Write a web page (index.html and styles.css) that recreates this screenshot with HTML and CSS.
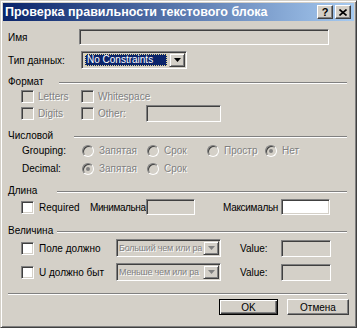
FILE: index.html
```html
<!DOCTYPE html>
<html lang="ru">
<head>
    <meta charset="UTF-8">
    <title>Проверка правильности текстового блока</title>
    <link rel="stylesheet" href="styles.css">
</head>
<body>
    <div class="window">
        <div class="titlebar">
            <span class="title">Проверка правильности текстового блока</span>
            <div class="cap-btns">
                <span class="cap-btn">?</span>
                <span class="cap-btn"><svg width="8" height="7" viewBox="0 0 8 7"><path d="M0.5 0.5 L7.5 6.5 M7.5 0.5 L0.5 6.5" stroke="#000" stroke-width="1.6"/></svg></span>
            </div>
        </div>

        <div class="body">
            <div class="row row-name">
                <span class="lbl lbl-name">Имя</span>
                <span class="field field-name"></span>
            </div>

            <div class="row row-type">
                <span class="lbl lbl-type">Тип данных:</span>
                <div class="combo combo-type">
                    <span class="combo-text selected">No Constraints</span>
                    <span class="combo-btn"><svg width="7" height="4" viewBox="0 0 7 4"><path d="M0 0 H7 L3.5 4 Z" fill="#000"/></svg></span>
                </div>
            </div>

            <!-- Формат -->
            <div class="group-head gh-format">
                <span class="gh-label w-format">Формат</span><span class="gh-line"></span>
            </div>
            <div class="row row-chk1">
                <span class="opt w60"><span class="chk dis"></span><span class="dim">Letters</span></span>
                <span class="opt"><span class="chk dis"></span><span class="dim">Whitespace</span></span>
            </div>
            <div class="row row-chk2">
                <span class="opt w60"><span class="chk dis"></span><span class="dim">Digits</span></span>
                <span class="opt w65"><span class="chk dis"></span><span class="dim">Other:</span></span>
                <span class="field field-other"></span>
            </div>

            <!-- Числовой -->
            <div class="group-head gh-num">
                <span class="gh-label w-num">Числовой</span><span class="gh-line"></span>
            </div>
            <div class="row row-group">
                <span class="lbl lbl-num">Grouping:</span>
                <span class="opt w65"><span class="radio"></span><span class="dim">Запятая</span></span>
                <span class="opt w60"><span class="radio"></span><span class="dim">Срок</span></span>
                <span class="opt w58"><span class="radio"></span><span class="dim">Простр</span></span>
                <span class="opt"><span class="radio on"></span><span class="dim">Нет</span></span>
            </div>
            <div class="row row-dec">
                <span class="lbl lbl-num">Decimal:</span>
                <span class="opt w65"><span class="radio on"></span><span class="dim">Запятая</span></span>
                <span class="opt"><span class="radio"></span><span class="dim">Срок</span></span>
            </div>

            <!-- Длина -->
            <div class="group-head gh-len">
                <span class="gh-label w-len">Длина</span><span class="gh-line"></span>
            </div>
            <div class="row row-len">
                <span class="opt w69"><span class="chk"></span><span>Required</span></span>
                <span class="lbl lbl-min">Минимальна</span>
                <span class="field field-len"></span>
                <span class="lbl lbl-max">Максимальн</span>
                <span class="field field-len white"></span>
            </div>

            <!-- Величина -->
            <div class="group-head gh-size">
                <span class="gh-label w-size">Величина</span><span class="gh-line"></span>
            </div>
            <div class="row row-size1">
                <span class="opt w95"><span class="chk"></span><span>Поле должно</span></span>
                <div class="combo combo-size">
                    <span class="combo-text dim tight">Больший чем или ра</span>
                    <span class="combo-btn"><svg width="7" height="4" viewBox="0 0 7 4"><path d="M0 0 H7 L3.5 4 Z" fill="#808080"/></svg></span>
                </div>
                <span class="lbl lbl-value">Value:</span>
                <span class="field field-value"></span>
            </div>
            <div class="row row-size2">
                <span class="opt w95"><span class="chk"></span><span>U должно быт</span></span>
                <div class="combo combo-size">
                    <span class="combo-text dim tight">Меньше чем или ра</span>
                    <span class="combo-btn"><svg width="7" height="4" viewBox="0 0 7 4"><path d="M0 0 H7 L3.5 4 Z" fill="#808080"/></svg></span>
                </div>
                <span class="lbl lbl-value">Value:</span>
                <span class="field field-value"></span>
            </div>

            <div class="separator"></div>

            <div class="buttons">
                <span class="btn btn-default">OK</span>
                <span class="btn btn-cancel">Отмена</span>
            </div>
        </div>
    </div>
</body>
</html>
```

FILE: styles.css
```css
body { margin: 0; font-family: "Liberation Sans", Arial, sans-serif; font-size: 10px; color: #000; }

.window {
    width: 357px; height: 328px; box-sizing: border-box; padding: 2px;
    background: #d4d0c8;
    border: 1px solid; border-color: #d4d0c8 #404040 #404040 #d4d0c8;
    box-shadow: inset 1px 1px #fff, inset -1px -1px #808080;
}

/* title bar */
.titlebar {
    height: 18px; display: flex; align-items: center; justify-content: space-between;
    padding: 0 3px 0 2px;
    background: linear-gradient(to right, #0a246a, #a6caf0);
    color: #fff; font-size: 12.5px; font-weight: bold;
}
.cap-btns { display: flex; gap: 2px; }
.cap-btn {
    width: 16px; height: 14px; box-sizing: border-box;
    display: flex; align-items: center; justify-content: center;
    background: #d4d0c8; color: #000; font-size: 11px; font-weight: bold;
    border: 1px solid; border-color: #fff #404040 #404040 #fff;
    box-shadow: inset -1px -1px #808080;
}

.body { padding: 0 7px 0 5px; }
.row { display: flex; align-items: center; }
.lbl { white-space: nowrap; flex: none; }

/* 3d controls */
.field, .chk, .combo {
    box-sizing: border-box; flex: none; background: #d4d0c8;
    border: 1px solid; border-color: #808080 #fff #fff #808080;
    box-shadow: inset 1px 1px #404040, inset -1px -1px #d4d0c8;
}
.field { height: 16px; }
.white, .chk { background: #fff; }
.chk { width: 13px; height: 13px; }
.chk.dis { background: #d4d0c8; }

.radio {
    width: 12px; height: 12px; box-sizing: border-box; flex: none; position: relative;
    border-radius: 50%; background: #d4d0c8;
    border: 1px solid; border-color: #808080 #fff #fff #808080;
    box-shadow: inset 1px 1px #404040;
}
.radio.on::after {
    content: ""; position: absolute; left: 3px; top: 3px;
    width: 4px; height: 4px; border-radius: 50%; background: #808080;
}

.dim { color: #808080; text-shadow: 1px 1px 0 #fff; }

.opt { display: flex; align-items: center; gap: 4px; flex: none; }
.w58 { width: 58px; }
.w60 { width: 60px; }
.w65 { width: 65px; }
.w69 { width: 69px; }
.w95 { width: 95px; }

/* top rows */
.row-name { margin-top: 8px; height: 16px; }
.lbl-name { width: 71px; }
.field-name { width: 250px; }

.row-type { margin-top: 6px; height: 18px; }
.lbl-type { width: 73px; }

.combo { height: 18px; display: flex; padding: 1px; }
.combo-type { width: 106px; }
.combo-text { flex: 1; overflow: hidden; white-space: nowrap; line-height: 12px; margin: 1px 2px 1px 2px; }
.tight { font-size: 9px; letter-spacing: -0.2px; margin: 1px 1px 1px 1px; }
.selected { background: #0a246a; color: #fff; padding-left: 2px; outline: 1px dotted #e8d890; outline-offset: -1px; }
.combo-btn {
    width: 16px; height: 14px; box-sizing: border-box; flex: none;
    display: flex; align-items: center; justify-content: center;
    border: 1px solid; border-color: #d4d0c8 #404040 #404040 #d4d0c8;
    box-shadow: inset 1px 1px #fff, inset -1px -1px #808080;
}

/* group headings */
.group-head { display: flex; align-items: flex-start; height: 12px; }
.gh-label { line-height: 12px; flex: none; }
.gh-line { flex: 1; margin-top: 6px; border-top: 1px solid #808080; border-bottom: 1px solid #fff; }
.gh-format { margin-top: 7px; }
.gh-num { margin-top: 8px; }
.gh-len, .gh-size { margin-top: 10px; }
.w-format { width: 51px; }
.w-num { width: 66px; }
.w-len, .w-size { width: 49px; }

/* format */
.row-chk1 { margin-top: 2px; height: 13px; padding-left: 13px; }
.row-chk2 { margin-top: 2px; height: 17px; padding-left: 13px; }
.field-other { width: 75px; height: 17px; }

/* numeric */
.row-group { margin-top: 2px; height: 13px; padding-left: 14px; }
.row-dec { margin-top: 5px; height: 13px; padding-left: 14px; }
.row-group .opt, .row-dec .opt { gap: 5px; }
.lbl-num { width: 60px; }

/* length */
.row-len { margin-top: 2px; height: 16px; padding-left: 13px; }
.row-len .opt { gap: 5px; }
.field-len { width: 49px; }
.lbl-min { width: 56px; letter-spacing: -0.4px; }
.lbl-max { width: 58px; margin-left: 28px; letter-spacing: -0.3px; }

/* size */
.row-size1 { margin-top: 2px; height: 18px; padding-left: 13px; }
.row-size2 { margin-top: 6px; height: 18px; padding-left: 13px; }
.row-size1 .opt, .row-size2 .opt { gap: 5px; }
.combo-size { width: 105px; }
.lbl-value { width: 41px; margin-left: 19px; }
.field-value { width: 50px; height: 17px; }

.separator { margin-top: 12px; border-top: 1px solid #808080; border-bottom: 1px solid #fff; }

.buttons { display: flex; justify-content: flex-end; gap: 9px; margin: 4px -2px 0 0; }
.btn {
    height: 16px; box-sizing: border-box; display: flex; align-items: center; justify-content: center;
    border: 1px solid; border-color: #fff #404040 #404040 #fff;
    box-shadow: inset -1px -1px #808080;
}
.btn-default { width: 59px; border-color: #000; box-shadow: inset 1px 1px #fff, inset -1px -1px #404040, inset -2px -2px #808080; }
.btn-cancel { width: 62px; }
```
